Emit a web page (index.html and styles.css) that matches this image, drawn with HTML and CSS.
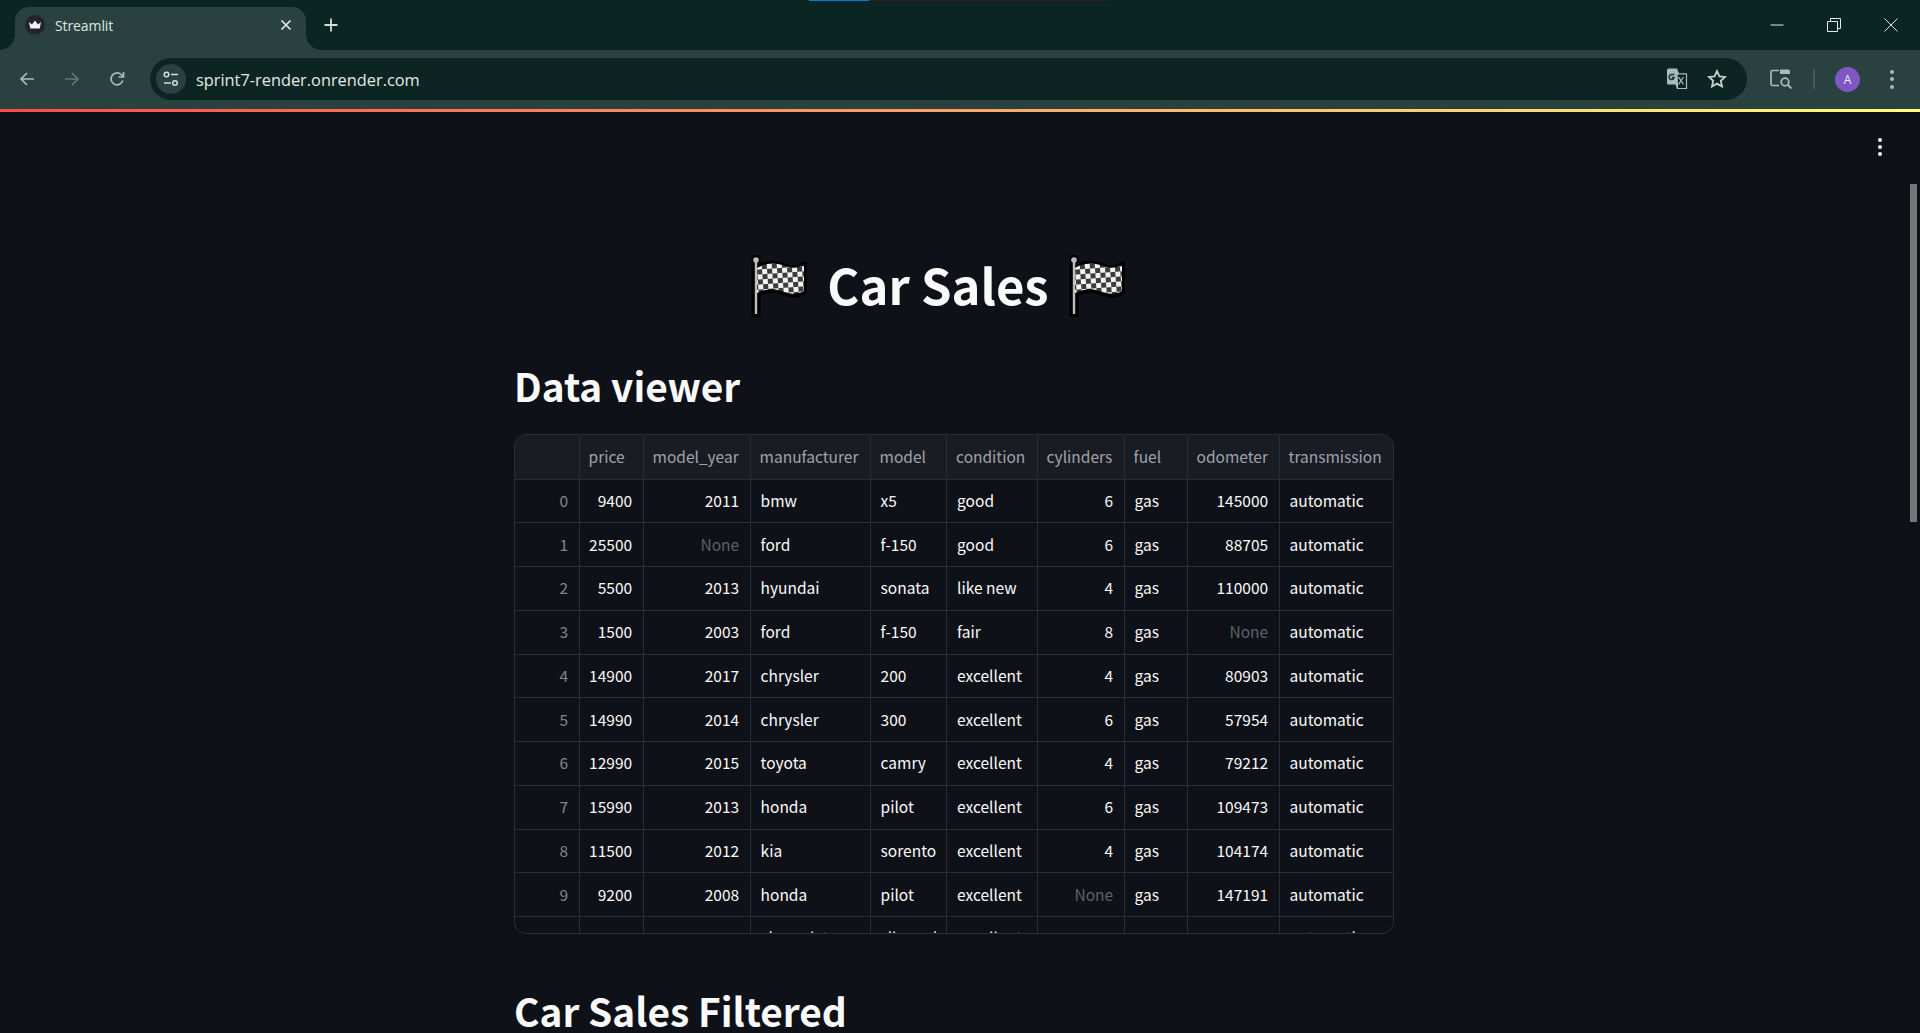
FILE: index.html
```html
<!DOCTYPE html>
<html lang="en">
<head>
    <meta charset="UTF-8">
    <meta name="viewport" content="width=device-width, initial-scale=1.0">
    <title>Streamlit</title>
    <link rel="stylesheet" href="styles.css">
</head>
<body>
    <svg class="defs" width="0" height="0">
        <defs>
            <pattern id="checks" width="10" height="10" patternUnits="userSpaceOnUse" patternTransform="rotate(-4)">
                <rect width="10" height="10" fill="#f2f2f2"/>
                <rect width="5" height="5" fill="#3c3c3c"/>
                <rect x="5" y="5" width="5" height="5" fill="#3c3c3c"/>
            </pattern>
            <symbol id="flag" viewBox="0 0 56 62">
                <path d="M5 4V60" stroke="#000" stroke-width="9" stroke-linecap="round"/>
                <path d="M5 13C17 6 26 8 34 11S47 13 54 9V37C46 42 38 40 30 37S15 35 5 40Z" fill="#000" stroke="#000" stroke-width="5" stroke-linejoin="round"/>
                <path d="M5 4V59" stroke="#bdbdbd" stroke-width="2.4"/>
                <circle cx="5" cy="5" r="2.8" fill="#bdbdbd"/>
                <path d="M6 13C17 7 26 8 34 11S47 13 53 10V36C46 40 38 39 30 36S15 34 6 38Z" fill="url(#checks)"/>
            </symbol>
        </defs>
    </svg>

    <div class="capture-bar"><span class="capture-blue"></span><span class="capture-red"></span></div>

    <header class="browser">
        <div class="tabstrip">
            <div class="tab">
                <span class="favicon">
                    <svg viewBox="0 0 20 20" width="20" height="20"><circle cx="10" cy="10" r="10" fill="#24242c"/><path d="M4 7l3 2.4L10 5.500l3 3.900L16 7l-1.300 6.500H5.300Z" fill="#f4f4f4"/></svg>
                </span>
                <span class="tab-title">Streamlit</span>
                <svg class="tab-close" viewBox="0 0 12 12" width="12" height="12"><path d="M1.500 1.500l9 9M10.500 1.500l-9 9" stroke="#e3e8e7" stroke-width="1.700" fill="none"/></svg>
            </div>
            <svg class="new-tab" viewBox="0 0 14 14" width="14" height="14"><path d="M7 0.500v13M0.500 7h13" stroke="#d5dcdb" stroke-width="1.800" fill="none"/></svg>
            <div class="window-controls">
                <svg viewBox="0 0 14 14" width="14" height="14"><path d="M0.500 7h13" stroke="#e6e9e8" stroke-width="1"/></svg>
                <svg viewBox="0 0 14 14" width="14" height="14"><path d="M0.500 3.500h10v10h-10zM3.500 3.500v-3h10v10h-3" stroke="#e6e9e8" stroke-width="1" fill="none"/></svg>
                <svg viewBox="0 0 14 14" width="14" height="14"><path d="M0.500 0.500l13 13M13.500 0.500l-13 13" stroke="#e6e9e8" stroke-width="1" fill="none"/></svg>
            </div>
        </div>
        <div class="toolbar">
            <div class="nav-buttons">
                <svg viewBox="0 0 16 16" width="16" height="16"><path d="M15 8H2M8 2L2 8l6 6" stroke="#a9bcb9" stroke-width="1.700" fill="none"/></svg>
                <svg viewBox="0 0 16 16" width="16" height="16"><path d="M1 8h13M8 2l6 6-6 6" stroke="#62787a" stroke-width="1.700" fill="none"/></svg>
                <svg viewBox="0 0 16 16" width="16" height="16"><path d="M13.800 9.500A6 6 0 1 1 12.200 3.500L14 5.300M14.500 1v5h-5" stroke="#a9bcb9" stroke-width="1.700" fill="none"/></svg>
            </div>
            <div class="omnibox">
                <span class="site-info">
                    <svg viewBox="0 0 16 16" width="16" height="16"><circle cx="3.500" cy="3.500" r="2.300" stroke="#d5dcdb" stroke-width="1.500" fill="none"/><path d="M8 3.500h7M1 12h7" stroke="#d5dcdb" stroke-width="1.500"/><circle cx="12" cy="12" r="2.300" stroke="#d5dcdb" stroke-width="1.500" fill="none"/></svg>
                </span>
                <span class="url">sprint7-render.onrender.com</span>
                <svg class="translate-icon" viewBox="0 0 22 22" width="22" height="22"><path d="M1 2a1.500 1.500 0 0 1 1.500-1.500H11l2 5h7a1.500 1.500 0 0 1 1 1.500V19.500a1.500 1.500 0 0 1-1.500 1.500H11l-1.500-4.500H2.500A1.500 1.500 0 0 1 1 15Z" fill="#a9bcb9"/><path d="M11 6h9.500v14.500H11.500Z" fill="#0c2522" stroke="#a9bcb9" stroke-width="1.200"/><path d="M8.500 6.500H5.500a2.500 2.500 0 1 0 2.600 3H5.700" stroke="#1e3734" stroke-width="1.500" fill="none"/><path d="M12.500 9l5 7.500M17.500 9l-5 7.500" stroke="#a9bcb9" stroke-width="1.300" fill="none"/></svg>
                <svg class="star-icon" viewBox="0 0 20 20" width="20" height="20"><path d="M10 2l2.400 5.300 5.600.6-4.200 3.900 1.200 5.700L10 14.600l-5 2.900 1.200-5.700L2 7.900l5.600-.6Z" stroke="#c6d0ce" stroke-width="1.800" fill="none" stroke-linejoin="miter"/></svg>
            </div>
            <div class="toolbar-actions">
                <svg viewBox="0 0 22 20" width="22" height="20"><path d="M9 1.500H2.500a1.500 1.500 0 0 0-1.500 1.500v12a1.500 1.500 0 0 0 1.500 1.500H9" stroke="#a9bcb9" stroke-width="1.700" fill="none"/><path d="M10 0.500h8a2 2 0 0 1 2 2V5H10Z" fill="#a9bcb9"/><circle cx="15" cy="13" r="3.800" stroke="#a9bcb9" stroke-width="1.800" fill="none"/><path d="M18 16l3.500 3.500" stroke="#a9bcb9" stroke-width="1.800"/></svg>
                <span class="toolbar-divider"></span>
                <span class="avatar">A</span>
                <span class="kebab"><i></i><i></i><i></i></span>
            </div>
        </div>
    </header>
    <div class="rainbow"></div>

    <div class="viewport">
        <main class="app">
            <button class="app-menu"><i></i><i></i><i></i></button>
            <section class="block">
                <h1 class="page-title">
                    <svg class="flag" width="56" height="62"><use href="#flag"/></svg>
                    <span class="title-text">Car Sales</span>
                    <svg class="flag" width="56" height="62"><use href="#flag"/></svg>
                </h1>
                <h2 class="section-title">Data viewer</h2>
                <div class="data-frame">
                    <div class="cell head"></div>
                    <div class="cell head">price</div>
                    <div class="cell head">model_year</div>
                    <div class="cell head">manufacturer</div>
                    <div class="cell head">model</div>
                    <div class="cell head">condition</div>
                    <div class="cell head">cylinders</div>
                    <div class="cell head">fuel</div>
                    <div class="cell head">odometer</div>
                    <div class="cell head">transmission</div>

                    <div class="cell idx">0</div><div class="cell num">9400</div><div class="cell num">2011</div><div class="cell">bmw</div><div class="cell">x5</div><div class="cell">good</div><div class="cell num">6</div><div class="cell">gas</div><div class="cell num">145000</div><div class="cell">automatic</div>
                    <div class="cell idx">1</div><div class="cell num">25500</div><div class="cell num none">None</div><div class="cell">ford</div><div class="cell">f-150</div><div class="cell">good</div><div class="cell num">6</div><div class="cell">gas</div><div class="cell num">88705</div><div class="cell">automatic</div>
                    <div class="cell idx">2</div><div class="cell num">5500</div><div class="cell num">2013</div><div class="cell">hyundai</div><div class="cell">sonata</div><div class="cell">like new</div><div class="cell num">4</div><div class="cell">gas</div><div class="cell num">110000</div><div class="cell">automatic</div>
                    <div class="cell idx">3</div><div class="cell num">1500</div><div class="cell num">2003</div><div class="cell">ford</div><div class="cell">f-150</div><div class="cell">fair</div><div class="cell num">8</div><div class="cell">gas</div><div class="cell num none">None</div><div class="cell">automatic</div>
                    <div class="cell idx">4</div><div class="cell num">14900</div><div class="cell num">2017</div><div class="cell">chrysler</div><div class="cell">200</div><div class="cell">excellent</div><div class="cell num">4</div><div class="cell">gas</div><div class="cell num">80903</div><div class="cell">automatic</div>
                    <div class="cell idx">5</div><div class="cell num">14990</div><div class="cell num">2014</div><div class="cell">chrysler</div><div class="cell">300</div><div class="cell">excellent</div><div class="cell num">6</div><div class="cell">gas</div><div class="cell num">57954</div><div class="cell">automatic</div>
                    <div class="cell idx">6</div><div class="cell num">12990</div><div class="cell num">2015</div><div class="cell">toyota</div><div class="cell">camry</div><div class="cell">excellent</div><div class="cell num">4</div><div class="cell">gas</div><div class="cell num">79212</div><div class="cell">automatic</div>
                    <div class="cell idx">7</div><div class="cell num">15990</div><div class="cell num">2013</div><div class="cell">honda</div><div class="cell">pilot</div><div class="cell">excellent</div><div class="cell num">6</div><div class="cell">gas</div><div class="cell num">109473</div><div class="cell">automatic</div>
                    <div class="cell idx">8</div><div class="cell num">11500</div><div class="cell num">2012</div><div class="cell">kia</div><div class="cell">sorento</div><div class="cell">excellent</div><div class="cell num">4</div><div class="cell">gas</div><div class="cell num">104174</div><div class="cell">automatic</div>
                    <div class="cell idx">9</div><div class="cell num">9200</div><div class="cell num">2008</div><div class="cell">honda</div><div class="cell">pilot</div><div class="cell">excellent</div><div class="cell num none">None</div><div class="cell">gas</div><div class="cell num">147191</div><div class="cell">automatic</div>
                    <div class="cell idx">10</div><div class="cell num">19500</div><div class="cell num">2011</div><div class="cell">chevrolet</div><div class="cell">silverado</div><div class="cell">excellent</div><div class="cell num">8</div><div class="cell">gas</div><div class="cell num">128413</div><div class="cell">automatic</div>
                </div>
                <h2 class="section-title filtered">Car Sales Filtered</h2>
            </section>
        </main>
        <div class="scrollbar"><div class="scroll-thumb"></div></div>
    </div>
</body>
</html>
```

FILE: styles.css
```css
* {
    box-sizing: border-box;
}
html, body {
    height: 100%;
}
body {
    margin: 0;
    display: flex;
    flex-direction: column;
    overflow: hidden;
    background: #0e1117;
    color: #fafafa;
    font-family: "Noto Sans CJK SC", "Source Sans Pro", sans-serif;
}
.defs {
    position: absolute;
}

/* browser frame */
.capture-bar {
    position: absolute;
    top: 0;
    left: 809px;
    display: flex;
    height: 1px;
}
.capture-blue {
    width: 60px;
    background: #0a78d7;
}
.capture-red {
    width: 240px;
    background: #2a2020;
}
.browser {
    flex: none;
    background: #2a423f;
}
.tabstrip {
    height: 50px;
    display: flex;
    align-items: flex-end;
    background: #0b2522;
}
.tab {
    position: relative;
    width: 291px;
    height: 43px;
    margin-left: 15px;
    padding: 0 14px 7px 10px;
    display: flex;
    align-items: center;
    background: #2a423f;
    border-radius: 14px 14px 0 0;
}
.tab::before, .tab::after {
    content: "";
    position: absolute;
    bottom: 0;
    width: 15px;
    height: 15px;
}
.tab::before {
    left: -15px;
    background: radial-gradient(circle at 0 0, #0b2522 14.500px, #2a423f 15px);
}
.tab::after {
    right: -15px;
    background: radial-gradient(circle at 100% 0, #0b2522 14.500px, #2a423f 15px);
}
.favicon {
    display: flex;
    margin-right: 10px;
}
.tab-title {
    flex: 1;
    font-family: "Open Sans", sans-serif;
    font-size: 14px;
    letter-spacing: -0.1px;
    color: #dfe5e4;
}
.new-tab {
    margin: 0 0 18px 18px;
}
.window-controls {
    margin: 0 0 18px auto;
    padding-right: 22px;
    display: flex;
    gap: 43px;
}
.toolbar {
    height: 59px;
    padding: 8px 0 9px 19px;
    display: flex;
    align-items: center;
}
.nav-buttons {
    width: 131px;
    display: flex;
    gap: 29px;
}
.omnibox {
    width: 1597px;
    height: 42px;
    padding: 0 20px 0 6px;
    display: flex;
    align-items: center;
    background: #0c2522;
    border-radius: 21px;
}
.site-info {
    width: 30px;
    height: 30px;
    margin-right: 10px;
    display: flex;
    align-items: center;
    justify-content: center;
    background: #2a423f;
    border-radius: 50%;
}
.url {
    flex: 1;
    padding-top: 1px;
    font-family: "Open Sans", sans-serif;
    font-size: 16.350px;
    color: #e3e9e8;
}
.translate-icon {
    margin-right: 19px;
}
.toolbar-actions {
    flex: 1;
    padding-left: 23px;
    display: flex;
    align-items: center;
}
.toolbar-divider {
    width: 2px;
    height: 20px;
    margin: 0 20px 0 21px;
    background: #41595a;
}
.avatar {
    width: 25px;
    height: 25px;
    display: flex;
    align-items: center;
    justify-content: center;
    border-radius: 50%;
    background: #7e57c2;
    color: #f1ecf9;
    font-family: "Open Sans", sans-serif;
    font-size: 12px;
}
.kebab {
    margin-left: 30px;
    display: flex;
    flex-direction: column;
    gap: 3.500px;
}
.kebab i {
    width: 4px;
    height: 4px;
    border-radius: 50%;
    background: #a9bcb9;
}
.rainbow {
    flex: none;
    height: 3px;
    background: linear-gradient(to right, #ff4b4b, #fffd80);
}

/* streamlit page */
.viewport {
    flex: 1;
    min-height: 0;
    display: flex;
}
.app {
    position: relative;
    flex: 1;
    min-width: 0;
    overflow: hidden;
}
.app-menu {
    position: absolute;
    top: 26px;
    right: 26px;
    padding: 0;
    display: flex;
    flex-direction: column;
    gap: 3px;
    background: none;
    border: none;
}
.app-menu i {
    width: 4px;
    height: 4px;
    border-radius: 50%;
    background: #fafafa;
}
.block {
    width: 880px;
    margin: 0 auto;
    padding-top: 143px;
}
.page-title {
    margin: 0;
    height: 62px;
    padding-right: 32px;
    display: flex;
    align-items: center;
    justify-content: center;
    gap: 20px;
    font-size: 49px;
    font-weight: 700;
    line-height: 58px;
}
.title-text {
    padding-bottom: 4px;
}
.section-title {
    margin: 40px 0 0;
    font-size: 38.800px;
    font-weight: 600;
    line-height: 56px;
}
.section-title.filtered {
    margin-top: 48px;
}
.data-frame {
    margin-top: 21px;
    height: 500px;
    display: grid;
    grid-template-columns: 64.6px 64px 107px 120px 76.5px 90.5px 87px 63px 92px 1fr;
    grid-auto-rows: 43.750px;
    grid-template-rows: 44.500px;
    overflow: hidden;
    border: 1px solid #2b2d33;
    border-radius: 12px;
}
.cell {
    padding: 0 10px 2px;
    display: flex;
    align-items: center;
    overflow: hidden;
    white-space: nowrap;
    font-size: 15.500px;
    line-height: 24px;
    color: #fafafa;
    border-right: 1px solid #2b2d33;
    border-bottom: 1px solid #2b2d33;
}
.cell:nth-child(10n) {
    border-right: none;
}
.head {
    padding-left: 9px;
    background: #1a1c24;
    color: #a0a3a8;
}
.num, .idx {
    padding-right: 10.500px;
    justify-content: flex-end;
}
.idx {
    color: #83868d;
}
.none {
    color: #5e6167;
}
.scrollbar {
    flex: none;
    width: 12px;
    padding: 72px 3px 0 2px;
}
.scroll-thumb {
    height: 338px;
    background: #767676;
}
```
